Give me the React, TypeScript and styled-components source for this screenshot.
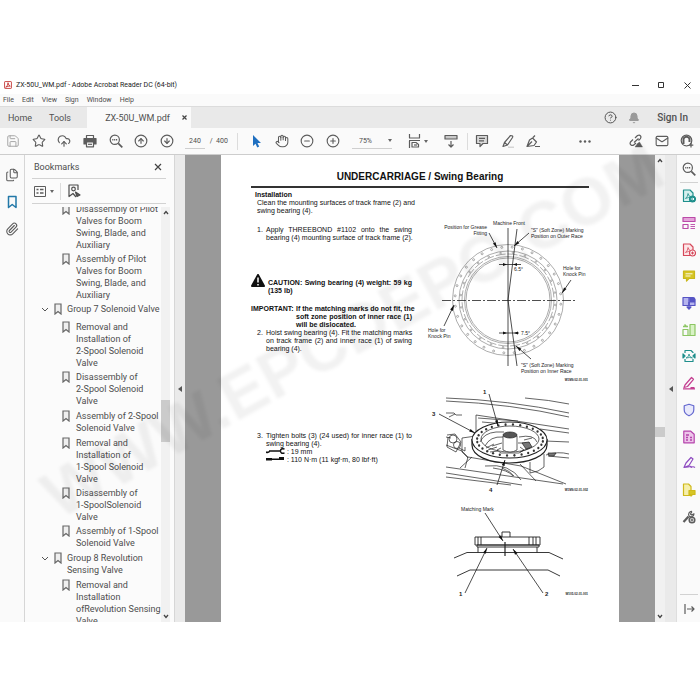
import React from 'react';
import styled, { createGlobalStyle, css } from 'styled-components';
import {
  Save, Star, CloudUpload, Hand, CircleMinus, CirclePlus, CircleArrowUp, CircleArrowDown,
  Mail, Paperclip, Bell, CircleHelp, Files,
} from 'lucide-react';

const Global = createGlobalStyle`
  * { box-sizing: border-box; }
  body { margin: 0; background: #fff; font-family: Roboto, "Open Sans", sans-serif; color: #4d4d4d; }
  button, select, input { font: inherit; color: inherit; background: none; border: 0; padding: 0; margin: 0; }
  ul, ol { list-style: none; margin: 0; padding: 0; }
  h1, h2, h3, p { margin: 0; }
`;

const Screen = styled.div`
  height: 100vh;
  padding: 76px 0 78px;
  display: flex;
  flex-direction: column;
  overflow: hidden;
`;

const AppWindow = styled.div`
  position: relative;
  flex: 1;
  min-height: 0;
  display: flex;
  flex-direction: column;
  overflow: hidden;
`;

const TitleBar = styled.header`
  height: 18px;
  display: flex;
  align-items: center;
  padding-left: 4px;
  gap: 4px;
  color: #222;
  font-size: 7px;
  line-height: 10px;
`;

const WindowControls = styled.div`
  margin-left: auto;
  display: flex;
  button { width: 26px; height: 18px; display: grid; place-items: center; }
`;

const MenuBar = styled.nav`
  height: 12px;
  display: flex;
  align-items: center;
  gap: 8px;
  padding-left: 3px;
  background: #fafafa;
  font-size: 7px;
  button { line-height: 12px; }
`;

const TabBar = styled.div`
  height: 22px;
  display: flex;
  align-items: center;
  background: #e9e9e9;
  border-top: 1px solid #dcdcdc;
  font-size: 9px;
  color: #505050;
`;

const Tab = styled.button<{ $width: number; $active?: boolean }>`
  width: ${(p) => p.$width}px;
  height: 21px;
  display: flex;
  align-items: center;
  justify-content: center;
  line-height: 12px;
  ${(p) => p.$active && css`
    margin-left: 7px;
    background: #fafafa;
    justify-content: flex-end;
    padding-right: 4px;
    gap: 12px;
  `}
`;

const Account = styled.div`
  margin-left: auto;
  display: flex;
  align-items: center;
  gap: 11px;
  padding-right: 12px;
  button { display: flex; align-items: center; }
`;

const SignIn = styled.button`
  margin-left: 6px;
  font-size: 10px;
  font-weight: 500;
`;

const Toolbar = styled.div`
  height: 27px;
  flex: none;
  display: flex;
  align-items: center;
  background: #fafafa;
  border-bottom: 1px solid #cdcdcd;
`;

const ToolGroup = styled.div<{ $width: number; $left?: number }>`
  width: ${(p) => p.$width}px;
  margin-left: ${(p) => p.$left ?? 0}px;
  display: flex;
`;

const ToolButton = styled.button<{ $tint?: string }>`
  flex: 1;
  height: 26px;
  display: flex;
  align-items: center;
  justify-content: center;
  gap: 2px;
  color: ${(p) => p.$tint ?? '#5c5c5c'};
`;

const MoreButton = styled(ToolButton)`
  flex: none;
`;

const Divider = styled.span`
  width: 1px;
  height: 17px;
  background: #dcdcdc;
`;

const PageField = styled.label`
  display: flex;
  align-items: center;
  font-size: 7px;
  line-height: 16px;
  margin-left: 5px;
  width: 52px;
  input { width: 20px; height: 16px; text-align: center; border-bottom: 1px solid #cfcfcf; }
  span { margin-left: 3px; white-space: pre; }
`;

const ZoomField = styled.div`
  width: 40px;
  margin-left: 6px;
  height: 16px;
  display: flex;
  align-items: center;
  border-bottom: 1px solid #cfcfcf;
  font-size: 7px;
  select { appearance: none; flex: 1; width: 20px; padding-left: 7px; outline: 0; }
`;

const Spacer = styled.span`
  flex: 1;
`;

const Workspace = styled.div`
  flex: 1;
  min-height: 0;
  display: flex;
`;

const LeftRail = styled.nav`
  width: 25px;
  flex: none;
  padding-top: 6px;
  display: flex;
  flex-direction: column;
  background: #fafafa;
  border-right: 1px solid #d6d6d6;
`;

const RailButton = styled.button<{ $tint?: string }>`
  height: 27px;
  display: grid;
  place-items: center;
  color: ${(p) => p.$tint ?? '#5c5c5c'};
`;

const BookmarkPanel = styled.aside`
  width: 150px;
  flex: none;
  padding: 0 4px 0 7px;
  display: flex;
  flex-direction: column;
  background: #fbfbfb;
  border-right: 1px solid #d6d6d6;
`;

const PanelHeader = styled.div`
  height: 24px;
  flex: none;
  margin-right: 4px;
  padding: 0 4px 0 2px;
  display: flex;
  align-items: center;
  justify-content: space-between;
  border-bottom: 1px solid #d2d2d2;
  h2 { font-size: 9px; font-weight: 400; line-height: 12px; }
  button { display: flex; }
`;

const PanelOptions = styled.div`
  height: 25px;
  flex: none;
  margin-right: 4px;
  padding-left: 2px;
  display: flex;
  align-items: center;
  gap: 6px;
  border-bottom: 1px solid #d2d2d2;
  button { display: flex; align-items: center; gap: 4px; }
`;

const TreeArea = styled.div`
  flex: 1;
  min-height: 0;
  margin-top: 3px;
  display: flex;
  overflow: hidden;
`;

const Tree = styled.ul`
  flex: 1;
  min-width: 0;
  margin-top: -4px;
  padding-left: 9px;
  font-size: 9px;
  line-height: 12px;
  white-space: nowrap;
`;

const TreeItem = styled.li<{ $level: number; $gap: number }>`
  display: flex;
  align-items: flex-start;
  gap: ${(p) => (p.$level === 1 ? 6 : 5)}px;
  padding-left: ${(p) => (p.$level === 1 ? 21 : 0)}px;
  padding-bottom: ${(p) => p.$gap}px;
  svg { flex: none; }
`;

const ScrollTrack = styled.div<{ $width: number }>`
  width: ${(p) => p.$width}px;
  flex: none;
  display: flex;
  flex-direction: column;
  align-items: center;
  justify-content: space-between;
  padding: 3px 0;
  background: #f1f1f1;
`;

const ScrollThumb = styled.span<{ $height: number; $after: number }>`
  width: 100%;
  height: ${(p) => p.$height}px;
  background: #cbcbcb;
  margin-top: auto;
  margin-bottom: ${(p) => p.$after}px;
`;

const Splitter = styled.button<{ $width: number }>`
  width: ${(p) => p.$width}px;
  flex: none;
  display: grid;
  place-items: center;
  background: #eaeaea;
`;

const Canvas = styled.main`
  flex: 1;
  min-width: 0;
  padding: 0 36px;
  background: #999;
  overflow: hidden;
`;

const Sheet = styled.article`
  height: 100%;
  padding: 16px 30px 0;
  background: #fff;
  color: #111;
  font-family: "Liberation Sans", Arial, sans-serif;
`;

const SheetTitle = styled.h1`
  padding-bottom: 3px;
  border-bottom: 2px solid #333;
  text-align: center;
  font-size: 10px;
  line-height: 12px;
`;

const Columns = styled.div`
  display: grid;
  grid-template-columns: minmax(0, 1fr) minmax(0, 1fr);
  gap: 16px;
`;

const Copy = styled.div`
  padding-top: 3px;
  font-size: 7px;
  line-height: 8px;
`;

const Block = styled.div<{ $top?: number; $indent?: number; $bold?: boolean }>`
  display: flex;
  margin-top: ${(p) => p.$top ?? 0}px;
  padding-left: ${(p) => p.$indent ?? 0}px;
  font-weight: ${(p) => (p.$bold ? 700 : 400)};
`;

const Marker = styled.span<{ $width: number }>`
  width: ${(p) => p.$width}px;
  flex: none;
  white-space: nowrap;
  svg { display: block; }
`;

const Lines = styled.div<{ $drop?: number }>`
  flex: 1;
  min-width: 0;
  padding-top: ${(p) => p.$drop ?? 0}px;
`;

const Line = styled.p<{ $full?: boolean }>`
  white-space: nowrap;
  ${(p) => p.$full && css`text-align: justify; text-align-last: justify;`}
`;

const Figures = styled.div`
  padding-top: 30px;
  display: flex;
  flex-direction: column;
`;

const Figure = styled.svg`
  display: block;
  width: 100%;
  overflow: visible;
  fill: none;
  stroke: #222;
  stroke-width: 0.8;
  text { fill: #1c1c1c; stroke: none; font-size: 5px; }
  .label { font-size: 6px; font-weight: 700; }
  .code { font-size: 3px; font-weight: 700; }
`;

const RightRail = styled.aside`
  width: 24px;
  flex: none;
  display: flex;
  flex-direction: column;
  background: #fafafa;
  border-left: 1px solid #dedede;
  hr { width: 18px; margin: 0 auto; border: 0; border-top: 1px solid #d2d2d2; }
`;

const ToolStack = styled.div`
  height: 347px;
  display: flex;
  flex-direction: column;
  button { flex: 1; display: grid; place-items: center; }
`;

const Watermark = styled.svg`
  position: absolute;
  inset: 0;
  width: 100%;
  height: 100%;
  pointer-events: none;
  text { font-family: "Liberation Sans", Arial, sans-serif; font-weight: 700; font-size: 66px; }
`;

type IconProps = { size?: number; color?: string; children: React.ReactNode; weight?: number };
const Icon = ({ size = 14, color = 'currentColor', weight = 1.2, children }: IconProps) => (
  <svg width={size} height={size} viewBox="0 0 14 14" fill="none" stroke={color} strokeWidth={weight} strokeLinejoin="round" aria-hidden="true">
    {children}
  </svg>
);

const Caret = () => (
  <svg width="4" height="3" viewBox="0 0 4 3" aria-hidden="true"><path d="M0 0h4L2 3z" fill="#666" /></svg>
);

const Chevron = ({ up }: { up?: boolean }) => (
  <svg width="6" height="5" viewBox="0 0 6 5" fill="none" stroke="#444" strokeWidth="1.3" aria-hidden="true">
    <path d={up ? 'M1 4l2-2.5L5 4' : 'M1 1l2 2.5L5 1'} />
  </svg>
);

const SideArrow = () => (
  <svg width="4" height="6" viewBox="0 0 4 6" aria-hidden="true"><path d="M4 0v6L0 3z" fill="#555" /></svg>
);

const Ribbon = () => (
  <svg width="8" height="12" viewBox="0 0 8 12" fill="#efefef" stroke="#666" strokeWidth="1.2" aria-hidden="true">
    <path d="M1 1h6v10L4 8.500 1 11z" />
  </svg>
);

const Glass = () => (
  <Icon>
    <circle cx="5.8" cy="5.8" r="4.6" />
    <path d="M9.3 9.3l4 4" strokeWidth="1.7" />
    <path d="M3.2 5.8h5.2" strokeWidth="1.5" strokeDasharray="1.2 .7" />
  </Icon>
);

type Node = { lines: string[]; level: number; gap: number };
const nodes: Node[] = [
  { level: 1, gap: 2, lines: ['Disassembly of Pilot', 'Valves for Boom', 'Swing, Blade, and', 'Auxiliary'] },
  { level: 1, gap: 2, lines: ['Assembly of Pilot', 'Valves for Boom', 'Swing, Blade, and', 'Auxiliary'] },
  { level: 0, gap: 6, lines: ['Group 7 Solenoid Valve'] },
  { level: 1, gap: 2, lines: ['Removal and', 'Installation of', '2-Spool Solenoid', 'Valve'] },
  { level: 1, gap: 3, lines: ['Disassembly of', '2-Spool Solenoid', 'Valve'] },
  { level: 1, gap: 3, lines: ['Assembly of 2-Spool', 'Solenoid Valve'] },
  { level: 1, gap: 2, lines: ['Removal and', 'Installation of', '1-Spool Solenoid', 'Valve'] },
  { level: 1, gap: 2, lines: ['Disassembly of', '1-SpoolSolenoid', 'Valve'] },
  { level: 1, gap: 3, lines: ['Assembly of 1-Spool', 'Solenoid Valve'] },
  { level: 0, gap: 3, lines: ['Group 8 Revolution', 'Sensing Valve'] },
  { level: 1, gap: 2, lines: ['Removal and', 'Installation', 'ofRevolution Sensing', 'Valve'] },
];

const Arrow = ({ x1, y1, x2, y2 }: { x1: number; y1: number; x2: number; y2: number }) => {
  const a = Math.atan2(y2 - y1, x2 - x1);
  const px = (d: number) => x2 - 6 * Math.cos(a + d);
  const py = (d: number) => y2 - 6 * Math.sin(a + d);
  return (
    <g>
      <path d={`M${x1} ${y1}L${x2} ${y2}`} />
      <path d={`M${x2} ${y2}L${px(0.25)} ${py(0.25)}L${px(-0.25)} ${py(-0.25)}z`} fill="#111" stroke="none" />
    </g>
  );
};

const ringPoints = (count: number, cx: number, cy: number, rx: number, ry: number) =>
  Array.from({ length: count }, (_, i) => {
    const t = ((i + 0.4) / count) * Math.PI * 2;
    return [cx + rx * Math.cos(t), cy + ry * Math.sin(t)];
  });

const RaceDiagram = () => (
  <Figure viewBox="0 0 161 168" role="img" aria-label="Swing bearing soft zone positions">
    <g stroke="#8a8a8a" strokeWidth="0.7">
      <circle cx="80" cy="82" r="55.5" />
      <circle cx="80" cy="82" r="49" />
      <circle cx="80" cy="82" r="46" strokeDasharray="10 2" />
      <circle cx="80" cy="82" r="43.5" />
      <circle cx="80" cy="82" r="42" />
      {ringPoints(32, 80, 82, 53, 53).map(([x, y], i) => <circle key={i} cx={x} cy={y} r="1" />)}
      {ringPoints(24, 80, 82, 47.5, 47.5).map(([x, y], i) => <circle key={i} cx={x} cy={y} r="0.8" />)}
    </g>
    <path d="M80 10V148M89 11L80 82L89 148" />
    <path d="M14 82.500H147" strokeDasharray="9 2 2 2" />
    <path d="M71 46.500h22M71 115h20" />
    <path d="M79 46.500l-4-1.500v3zM85 46.500l4-1.500v3zM79 115l-4-1.500v3zM86 115l4-1.500v3z" fill="#111" stroke="none" />
    <Arrow x1={61} y1={15} x2={69} y2={30} />
    <Arrow x1={101} y1={15} x2={86} y2={28} />
    <Arrow x1={143} y1={62} x2={134} y2={75} />
    <Arrow x1={16} y1={108} x2={26} y2={87} />
    <Arrow x1={103} y1={141} x2={88} y2={128} />
    <text x="81" y="7" textAnchor="middle">Machine Front</text>
    <text x="59" y="11" textAnchor="end">Position for Grease</text>
    <text x="59" y="17" textAnchor="end">Fitting</text>
    <text x="103" y="14">"S" (Soft Zone) Marking</text>
    <text x="103" y="20">Position on Outer Race</text>
    <text x="86" y="53">6.5°</text>
    <text x="135" y="52">Hole for</text>
    <text x="135" y="58">Knock Pin</text>
    <text x="0" y="114">Hole for</text>
    <text x="0" y="120">Knock Pin</text>
    <text x="93" y="117">7.5°</text>
    <text x="93" y="149">"S" (Soft Zone) Marking</text>
    <text x="93" y="155">Position on Inner Race</text>
    <text className="code" x="160" y="163" textAnchor="end">W1M9-02-01-001</text>
  </Figure>
);

const BearingDrawing = () => (
  <Figure viewBox="0 0 161 110" role="img" aria-label="Swing bearing on track frame">
    <g strokeWidth="0.7">
      <path d="M18 12Q80 14 141 27M18 15Q84 18 141 31M97 12Q122 14 141 18" />
      <path d="M18 27h8l2 2h6M27 28l-6 3M48 29l93 14M48 29v19M50 32l40 3M54 36l34 3M112 43l29 4M117 55l24 1M118 69q12-4 23-1M120 70l21 2" />
      <path d="M18 51l5 1M19 49l8-1 6 8-5 10-9-5 1-10M31 62l6 3v-4M18 59l16 6 6 6-3 11M40 71l53 9 45 18M44 71l-12 11M48 50l-14 2 0 14 6 6" />
      <circle cx="25" cy="53" r="4" /><circle cx="29" cy="59" r="3.500" />
      <path d="M18 81l117 17M18 87l76 12M18 91l65 8" />
      <path d="M57 80q25-3 36 14M65 82q15 2 20 8M74 82q8 3 12 8M92 78l16 17M102 76v11q9-1 14-6V68" />
      <path d="M44 53v6c0 11 17 18 37 18s38-7 38-18v-6" strokeWidth="1.200" fill="#fff" />
      <ellipse cx="81.500" cy="54" rx="37.500" ry="18" strokeWidth="1.100" fill="#fff" />
      <ellipse cx="82" cy="53" rx="29" ry="13" />
      <path d="M52 56q4-9 16-10h8M57 60q5-10 18-9M91 51q15-3 18 5M90 57h12" />
    </g>
    {ringPoints(28, 82, 54, 33, 15.5).map(([x, y], i) => (
      <ellipse key={i} cx={x} cy={y} rx="1.100" ry="1.300" fill="#333" stroke="none" />
    ))}
    <g fill="#fff" strokeWidth="0.7">
      <path d="M75 50v14q7 4 14 0V50z" />
      <ellipse cx="82" cy="49" rx="7" ry="3" fill="#555" />
      <path d="M73 62l-4 2 4 3h18l5-3-4-3M60 64l9-3M62 66l8-1M58 62l8-4M64 60l10-3M92 66l10-4M96 54l8-2" fill="none" />
      <path d="M94 57l7-1 3 5-6 2z" fill="#777" />
      <path d="M120 67h8l-2 3h-5z" fill="#777" />
    </g>
    <Arrow x1={61} y1={8} x2={70} y2={40} />
    <Arrow x1={11} y1={28} x2={47} y2={47} />
    <Arrow x1={69} y1={99} x2={77} y2={74} />
    <text className="label" x="55" y="8">1</text>
    <text className="label" x="4" y="30">3</text>
    <text className="label" x="61" y="106">4</text>
    <text className="code" x="160" y="105" textAnchor="end">W1M9-02-01-002</text>
  </Figure>
);

const MarkDrawing = () => (
  <Figure viewBox="0 0 161 110" role="img" aria-label="Matching mark">
    <g strokeWidth="0.9">
      <path d="M47 41h65v8H47zM49 49h62v2H49zM50 51v5.500M109 51v5.500" />
      <path d="M74 41v-5h8v5M50 41v8M53 41v8M101 41v8M105 41v8M108 41v8" />
      <path d="M26 62l13-5.500h82l14 6.500M29 80l13-6h78l12 6" />
      <path d="M77 46v14" strokeWidth="1.200" />
    </g>
    <Arrow x1={57} y1={17} x2={75} y2={45} />
    <Arrow x1={37} y1={97} x2={59} y2={52} />
    <Arrow x1={115} y1={97} x2={85} y2={53} />
    <text x="33" y="15">Matching Mark</text>
    <text className="label" x="31" y="100">1</text>
    <text className="label" x="117" y="100">2</text>
    <text className="code" x="160" y="99" textAnchor="end">W105-02-01-001</text>
  </Figure>
);

const Wrench = () => (
  <svg width="19" height="6" viewBox="0 0 19 6" aria-hidden="true" fill="none" stroke="#111">
    <path d="M0 4q2 1 3.500-.5M3 3h11" strokeWidth="1.600" />
    <path d="M18.500 1q-4-1-4 2t4 2" strokeWidth="1.400" />
  </svg>
);
const TorqueWrench = () => (
  <svg width="19" height="6" viewBox="0 0 19 6" aria-hidden="true" fill="#111">
    <path d="M0 2h6v2.500H0zM6 2.500h12v1.500H6zM13 1h5v2h-5z" />
  </svg>
);

const PdfPage = ({ color, fill = 'none' }: { color: string; fill?: string }) => (
  <>
    <path d="M1.500 1h6.500l3 3v8.500H1.500z" fill={fill} />
    <path d="M3.500 9.500q2.500-2 2.500-5 1 3.500 3.500 4-3-.5-6 1" strokeWidth=".8" stroke={color} />
  </>
);

const tools: { name: string; icon: React.ReactNode }[] = [
  { name: 'Export PDF', icon: <Icon color="#1f8f8c"><PdfPage color="#1f8f8c" fill="#d5f0ee" /><circle cx="10.500" cy="10" r="3" fill="#1f8f8c" /><path d="M8.800 10h3M10.800 8.800L12 10l-1.200 1.200" stroke="#fff" strokeWidth=".9" /></Icon> },
  { name: 'Edit PDF', icon: <Icon color="#bb4aa8"><path d="M1 1.500h12v4H1z" fill="#e4a3da" /><path d="M1 8.500h5v4H1z" /><path d="M8.500 8.500H13M8.500 10.500H13M8.500 12.500H13" strokeWidth=".9" /></Icon> },
  { name: 'Create PDF', icon: <Icon color="#d5485a"><PdfPage color="#d5485a" fill="#fde5e7" /><circle cx="10.500" cy="10" r="3" fill="#fff" /><path d="M9 10h3M10.500 8.500v3" /></Icon> },
  { name: 'Comment', icon: <Icon color="#c9b81c"><path d="M1.500 2h11v7.500H7L4.500 12V9.500h-3z" fill="#d6c524" /><path d="M3.500 4.800h7M3.500 7h5" stroke="#fff" strokeWidth=".9" /></Icon> },
  { name: 'Combine Files', icon: <Icon color="#5654c4"><path d="M1 1.500h6v8H1zM7 1.500h4l2 2v6H7z" fill="#b5b4ee" /><path d="M8 2h4.500v4H8z" fill="#5654c4" /><path d="M7 6v7M4.800 10.500L7 13l2.200-2.500" strokeWidth="1.500" /></Icon> },
  { name: 'Organize Pages', icon: <Icon color="#8cc663"><path d="M8 1.500h5v11H8z" fill="#d8f2c5" /><path d="M1 6.500h5v6H1zM6 12.500h2" /><path d="M1 3.500h5M2.500 1.500L5 4" strokeWidth="1.500" /></Icon> },
  { name: 'Compress PDF', icon: <Icon color="#1f8f8c"><path d="M3 4V1.500h6l2 2V4M3 10v2.500h8V10" /><path d="M4 9q3-1 3-4 0 3 3.500 4-3-1-6.500 0" strokeWidth=".8" /><path d="M1 5v4l2-2zM13 5v4l-2-2z" fill="#1f8f8c" /></Icon> },
  { name: 'Redact', icon: <Icon color="#c43f91"><path d="M3 9l6.500-7.500 2 1.800L5.500 10.500 2 11.500zM1 12.800h12" /><path d="M8.500 12h4" strokeWidth="2" /></Icon> },
  { name: 'Protect', icon: <Icon color="#6468cf"><path d="M7 1.200l4.800 1.600v4c0 3-2 4.800-4.800 6-2.800-1.200-4.800-3-4.800-6v-4z" fill="#e8e9fb" /></Icon> },
  { name: 'Prepare Form', icon: <Icon color="#b443ab"><path d="M1.800 1.200h7l3.400 3v8.600H1.800z" fill="#edc4ea" /><path d="M4 5h3M4 7.500h2M8 7.500h2M4 10h2M8 10h2" strokeWidth="1.500" /></Icon> },
  { name: 'Fill & Sign', icon: <Icon color="#8e4cc0"><path d="M2 11.500L4 7 9 1.500 11 3 7 9.500zM2 11.500q5-.5 6-1 1.500-.8 1 1 2-1.500 4 0" /></Icon> },
  { name: 'Send for Comments', icon: <Icon color="#cfb91b"><path d="M1.500 1h5l2.500 2.500v9H1.500z" fill="#f6efaa" /><path d="M7 7.500h6v4H10.500L9 13v-1.500H7z" fill="#d6c524" /></Icon> },
  { name: 'More Tools', icon: <Icon color="#5c5c5c"><path d="M1.500 12l5-5.500" strokeWidth="2.200" /><path d="M10 1.500L8.500 4l1 1L12 3.800A3 3 0 0 1 7 6a3 3 0 0 1 3-4.500" /><circle cx="10" cy="10" r="2.800" fill="#fafafa" strokeWidth="1.500" /><path d="M8.500 10h3M10 8.500v3" /></Icon> },
];

export default function App() {
  return (
    <Screen>
      <Global />
      <AppWindow>
        <TitleBar>
          <Icon size={8} color="#c2302e" weight={1.5}>
            <rect x="1" y="1" width="12" height="12" rx="1" fill="#fff" />
            <path d="M3 11q4-3 4-8 1 5 4 6-4-1-8 2" />
          </Icon>
          <span>ZX-50U_WM.pdf - Adobe Acrobat Reader DC (64-bit)</span>
          <WindowControls>
            <button aria-label="Minimize"><svg width="7" height="7"><path d="M0 3.500h7" stroke="#333" /></svg></button>
            <button aria-label="Maximize"><svg width="7" height="7"><path d="M.5.5h5v5h-5z" stroke="#333" fill="none" /></svg></button>
            <button aria-label="Close"><svg width="7" height="7"><path d="M.5.5l6 6m0-6l-6 6" stroke="#333" /></svg></button>
          </WindowControls>
        </TitleBar>
        <MenuBar>
          {['File', 'Edit', 'View', 'Sign', 'Window', 'Help'].map((m) => <button key={m}>{m}</button>)}
        </MenuBar>
        <TabBar>
          <Tab $width={40}>Home</Tab>
          <Tab $width={40}>Tools</Tab>
          <Tab $width={104} $active>
            ZX-50U_WM.pdf
            <svg width="5" height="5"><path d="M.5.5l4 4m0-4l-4 4" stroke="#444" strokeWidth="1.2" /></svg>
          </Tab>
          <Account>
            <button aria-label="Help"><CircleHelp size={13} strokeWidth={1.8} /></button>
            <button aria-label="Notifications"><Bell size={12} color="#9a9a9a" fill="#9a9a9a" /></button>
            <SignIn>Sign In</SignIn>
          </Account>
        </TabBar>
        <Toolbar>
          <ToolGroup $width={180}>
            <ToolButton aria-label="Save" $tint="#a0a0a0"><Save size={14} strokeWidth={1.6} /></ToolButton>
            <ToolButton aria-label="Star"><Star size={14} strokeWidth={1.9} /></ToolButton>
            <ToolButton aria-label="Upload"><CloudUpload size={14} strokeWidth={2} /></ToolButton>
            <ToolButton aria-label="Print">
              <Icon>
                <path d="M3.500 4V1.500h7V4" /><path d="M1 4.500h12v5.500H1z" fill="#5c5c5c" /><path d="M3.500 8h7v4.800h-7z" fill="#fafafa" /><path d="M5 10.300h4" />
              </Icon>
            </ToolButton>
            <ToolButton aria-label="Find"><Glass /></ToolButton>
            <ToolButton aria-label="Previous page"><CircleArrowUp size={14} strokeWidth={2} /></ToolButton>
            <ToolButton aria-label="Next page"><CircleArrowDown size={14} strokeWidth={2} /></ToolButton>
          </ToolGroup>
          <PageField>
            <input aria-label="Page number" defaultValue="240" />
            <span>{' /  400'}</span>
          </PageField>
          <Divider />
          <ToolGroup $width={103} $left={5}>
            <ToolButton aria-label="Select" $tint="#1f6fc0"><Icon color="none"><path d="M4 1v11l2.500-2.300L8.300 13.500l1.900-.9-1.700-3.500H12z" fill="#1f6fc0" /></Icon></ToolButton>
            <ToolButton aria-label="Pan"><Hand size={14} strokeWidth={1.8} /></ToolButton>
            <ToolButton aria-label="Zoom out"><CircleMinus size={14} strokeWidth={1.9} /></ToolButton>
            <ToolButton aria-label="Zoom in"><CirclePlus size={14} strokeWidth={1.9} /></ToolButton>
          </ToolGroup>
          <ZoomField>
            <select aria-label="Zoom level" defaultValue="75%"><option>75%</option></select>
            <Caret />
          </ZoomField>
          <ToolGroup $width={65} $left={10}>
            <ToolButton aria-label="Fit width">
              <Icon><path d="M1.500 0v4h10V0M1.500 14V7M1 6.500h11M4 13V8.500h4l2.500 2V13z" /><path d="M6 11h3" /></Icon>
              <Caret />
            </ToolButton>
            <ToolButton aria-label="Scroll mode">
              <Icon><path d="M1 1.500h12V5H1z" fill="#c9c9c9" /><path d="M7 7v6M4.500 10.500L7 13l2.500-2.500" /></Icon>
            </ToolButton>
          </ToolGroup>
          <Divider />
          <ToolGroup $width={77} $left={1}>
            <ToolButton aria-label="Add comment"><Icon><path d="M1.500 1.500h11v8H8L5 12.500v-3H1.500z" fill="#d9d9d9" /><path d="M4 4.300h6M4 6.800h5" /></Icon></ToolButton>
            <ToolButton aria-label="Highlight"><Icon><path d="M7 13.200h6" stroke="#ccc" /><path d="M3.500 8.500L9.500 1.500q3 0 2 2L6.500 11 2 12.500zM3.500 8.500l3 2.500" /></Icon></ToolButton>
            <ToolButton aria-label="Sign"><Icon><path d="M1 12.500L3.500 6 6.500 4l4 4-2.500 3.500zM1 12.500l5-5M7 3.500L9 1.500M9 12.500h5" /></Icon></ToolButton>
          </ToolGroup>
          <Spacer />
          <MoreButton aria-label="More">
            <svg width="12" height="3"><circle cx="1.5" cy="1.5" r="1.2" fill="#5c5c5c" /><circle cx="6" cy="1.5" r="1.2" fill="#5c5c5c" /><circle cx="10.5" cy="1.5" r="1.2" fill="#5c5c5c" /></svg>
          </MoreButton>
          <Spacer />
          <ToolGroup $width={77}>
            <ToolButton aria-label="Share link"><Icon><path d="M5 8.500l4.500-4M4 5.500L1.500 8q-1 2 .5 3 1.500 1 3-.3L7 9M6 4l2.500-2.500q2-1 3 .3 1 1.500-.3 3L9.500 6.500" /><path d="M6 13l2.500-3.500L10.500 8l3 5z" fill="#5c5c5c" strokeWidth=".4" /></Icon></ToolButton>
            <ToolButton aria-label="Email"><Mail size={14} strokeWidth={1.9} /></ToolButton>
            <ToolButton aria-label="Invite"><Icon><circle cx="6.5" cy="6.5" r="5.3" /><path d="M6.500 3q2.500 0 2.300 2.800L8 8v1l2 1.200q-3.500 2-7 0L5 9V8L4.200 5.800Q4 3 6.500 3z" fill="#fafafa" stroke="none" /><path d="M3.500 10V4.500q3-3.500 6 0V8" strokeWidth="2" /><path d="M11 9v4.500M8.800 11.200h4.500" /></Icon></ToolButton>
          </ToolGroup>
        </Toolbar>

        <Workspace>
          <LeftRail>
            <RailButton aria-label="Page thumbnails"><Files size={14} strokeWidth={1.8} /></RailButton>
            <RailButton aria-label="Bookmarks" $tint="#2278a8"><Icon weight={1.5}><path d="M3.500 1.500h7.500v11L7.200 9.500l-3.700 3z" /></Icon></RailButton>
            <RailButton aria-label="Attachments"><Paperclip size={14} strokeWidth={1.9} /></RailButton>
          </LeftRail>
          <BookmarkPanel>
            <PanelHeader>
              <h2>Bookmarks</h2>
              <button aria-label="Close panel"><svg width="8" height="8"><path d="M1 1l6 6m0-6L1 7" stroke="#444" strokeWidth="1.2" /></svg></button>
            </PanelHeader>
            <PanelOptions>
              <button aria-label="Options">
                <svg width="12" height="11" viewBox="0 0 12 11" fill="none" stroke="#5c5c5c"><path d="M.5.5h11v10H.5z" /><path d="M2.500 3.500h2M6 3.500h3.500M2.500 7h2M6 7h3.500" strokeWidth="1.5" /></svg>
                <Caret />
              </button>
              <Divider />
              <button aria-label="Find bookmark">
                <Icon><path d="M9 13L6 9.500 2 12.500V1h9v5" /><circle cx="6.5" cy="5" r="1.8" /><path d="M8.500 8l4.500 3-3 1.500z" fill="#5c5c5c" /></Icon>
              </button>
            </PanelOptions>
            <TreeArea>
              <Tree>
                {nodes.map((n, i) => (
                  <TreeItem key={i} $level={n.level} $gap={n.gap}>
                    {n.level === 0 && (
                      <svg width="8" height="12" viewBox="0 0 8 12" fill="none" stroke="#555"><path d="M1 5l3 3 3-3" /></svg>
                    )}
                    <Ribbon />
                    <span>{n.lines.map((l) => <React.Fragment key={l}>{l}<br /></React.Fragment>)}</span>
                  </TreeItem>
                ))}
              </Tree>
              <ScrollTrack $width={9}>
                <Chevron up />
                <ScrollThumb $height={42} $after={172} />
                <Chevron />
              </ScrollTrack>
            </TreeArea>
          </BookmarkPanel>
          <Splitter $width={10} aria-label="Collapse bookmarks"><SideArrow /></Splitter>

          <Canvas>
            <Sheet>
              <SheetTitle>UNDERCARRIAGE / Swing Bearing</SheetTitle>
              <Columns>
                <Copy>
                  <Block $indent={4} $bold>Installation</Block>
                  <Block $indent={6}><Lines><Line $full>Clean the mounting surfaces of track frame (2) and</Line><Line>swing bearing (4).</Line></Lines></Block>
                  <Block $top={11} $indent={6}>
                    <Marker $width={9}>1.</Marker>
                    <Lines><Line $full>Apply THREEBOND #1102 onto the swing</Line><Line>bearing (4) mounting surface of track frame (2).</Line></Lines>
                  </Block>
                  <Block $top={32} $bold>
                    <Marker $width={17}>
                      <svg width="14" height="13" viewBox="0 0 14 13" aria-hidden="true"><path d="M7 1l6 11H1z" fill="#111" stroke="#111" strokeWidth="2" strokeLinejoin="round" /><path d="M7 3.500v5M7 10v1.500" stroke="#fff" strokeWidth="1.5" /></svg>
                    </Marker>
                    <Lines $drop={5}><Line $full>CAUTION: Swing bearing (4) weight: 59 kg</Line><Line>(135 lb)</Line></Lines>
                  </Block>
                  <Block $top={10} $bold>
                    <Marker $width={45}>IMPORTANT:</Marker>
                    <Lines><Line $full>If the matching marks do not fit, the</Line><Line $full>soft zone position of inner race (1)</Line><Line>will be dislocated.</Line></Lines>
                  </Block>
                  <Block $indent={6}>
                    <Marker $width={9}>2.</Marker>
                    <Lines><Line $full>Hoist swing bearing (4). Fit the matching marks</Line><Line $full>on track frame (2) and inner race (1) of swing</Line><Line>bearing (4).</Line></Lines>
                  </Block>
                  <Block $top={79} $indent={6}>
                    <Marker $width={9}>3.</Marker>
                    <Lines>
                      <Line $full>Tighten bolts (3) (24 used) for inner race (1) to</Line>
                      <Line>swing bearing (4).</Line>
                      <Line><Wrench /> : 19 mm</Line>
                      <Line><TorqueWrench /> : 110 N·m (11 kgf·m, 80 lbf·ft)</Line>
                    </Lines>
                  </Block>
                </Copy>
                <Figures>
                  <RaceDiagram />
                  <BearingDrawing />
                  <MarkDrawing />
                </Figures>
              </Columns>
            </Sheet>
          </Canvas>
          <ScrollTrack $width={10}>
            <Chevron up />
            <ScrollThumb $height={10} $after={177} />
            <Chevron />
          </ScrollTrack>
          <Splitter $width={11} aria-label="Collapse tools"><SideArrow /></Splitter>
          <RightRail>
            <RailButton aria-label="Search tools"><Glass /></RailButton>
            <hr />
            <ToolStack>
              {tools.map((t) => <button key={t.name} aria-label={t.name}>{t.icon}</button>)}
            </ToolStack>
            <Spacer />
            <hr />
            <RailButton aria-label="Expand"><Icon><path d="M3 2v10M5 7h7M9.500 4.500L12 7l-2.500 2.500" /></Icon></RailButton>
          </RightRail>
        </Workspace>

        <Watermark viewBox="0 0 700 546" aria-hidden="true">
          <defs>
            <filter id="soft" x="-5%" y="-5%" width="110%" height="110%"><feGaussianBlur stdDeviation="1.5" /></filter>
          </defs>
          <g transform="translate(59 444) rotate(-29)">
            <text fill="#000" fillOpacity="0.05" filter="url(#soft)">WWW.EPCDEPO.COM</text>
          </g>
        </Watermark>
      </AppWindow>
    </Screen>
  );
}
